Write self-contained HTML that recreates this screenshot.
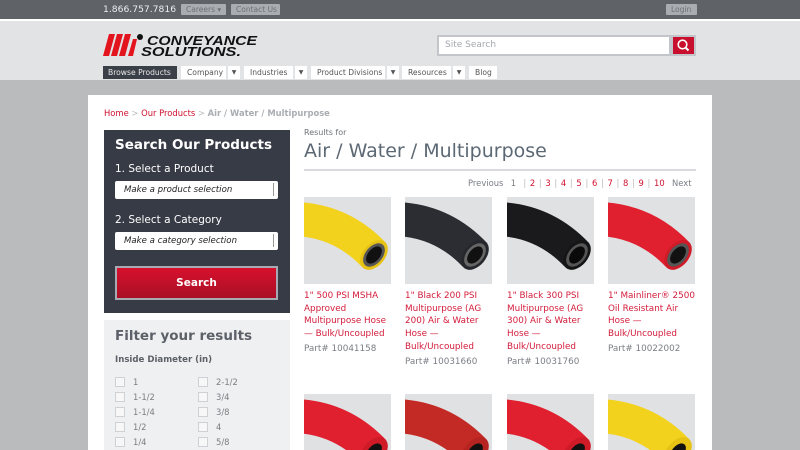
<!DOCTYPE html>
<html><head><meta charset="utf-8"><style>
*{margin:0;padding:0;box-sizing:border-box}
html,body{width:800px;height:450px;overflow:hidden}
body{background:#b9bbbd;font-family:"DejaVu Sans",Verdana,sans-serif;position:relative}
.abs{position:absolute;white-space:nowrap}
.top{left:0;top:0;width:800px;height:19px;background:#5f6266}
.white{left:0;top:19px;width:800px;height:2px;background:#fff}
.hdr{left:0;top:21px;width:800px;height:59px;background:#e2e3e5}
.btn{background:#a9acb1;color:#6d7177;font-size:7.5px;height:11px;line-height:11px;padding:0 5px;top:4px;border-radius:1px}
.tab{top:66px;height:13px;background:#fff;font-size:7.6px;line-height:13px;color:#555;padding:0 6px}
.dd{top:66px;height:13px;width:12px;background:#fff;font-size:6px;line-height:13px;text-align:center;color:#555}
.panel{left:88px;top:95px;width:624px;height:355px;background:#fff}
.r{color:#d0102f}
.prod{width:87px;white-space:normal}
.img{width:87px;height:87px;background:#e0e1e3;overflow:hidden}
.img svg{display:block}
.img.s{height:56px}
.t{font-size:8.8px;line-height:12.7px;color:#d31b3a;margin-top:6px}
.p{font-size:8.8px;line-height:12.7px;color:#7a7e84;margin-top:2px}
.sel{left:115px;width:163px;height:18px;background:#fff;border-radius:2px;font-size:8.6px;font-style:italic;line-height:18px;padding-left:9px;color:#222}
.sel:after{content:"";position:absolute;right:1px;top:2px;width:3px;height:13px;border-left:1px solid #999}
.cb{font-size:8.4px;color:#7a7e84;height:15px;line-height:15px}
.cb i{display:inline-block;width:10px;height:10px;border:1px solid #cfd1d4;background:#f7f7f8;vertical-align:-2px;margin-right:8px}
</style></head><body>
<div class="abs top"></div>
<div class="abs" style="left:103px;top:3px;color:#eceef0;font-size:9.2px;line-height:13px">1.866.757.7816</div>
<div class="abs btn" style="left:181px">Careers ▾</div>
<div class="abs btn" style="left:231px;width:49px">Contact Us</div>
<div class="abs btn" style="left:666px;width:31px;padding:0 0 0 5px">Login</div>
<div class="abs white"></div>
<div class="abs hdr"></div>
<svg class="abs" style="left:103px;top:33px" width="160" height="25" viewBox="0 0 160 25">
<polygon points="6,1 12,1 6,23 0,23" fill="#e3141d"/>
<polygon points="14,1 20,1 14,23 8,23" fill="#e3141d"/>
<polygon points="22,1 28,1 22,23 16,23" fill="#e3141d"/>
<polygon points="30,6 34,6 30,23 25,23" fill="#e3141d"/>
<circle cx="37" cy="4" r="3" fill="#111"/>
<text x="44" y="12" font-family="Liberation Sans,sans-serif" font-weight="bold" font-style="italic" font-size="13" fill="#111" textLength="110" lengthAdjust="spacingAndGlyphs">CONVEYANCE</text>
<text x="38" y="23" font-family="Liberation Sans,sans-serif" font-weight="bold" font-style="italic" font-size="13" fill="#111" textLength="100" lengthAdjust="spacingAndGlyphs">SOLUTIONS.</text>
</svg>
<div class="abs" style="left:437px;top:35px;width:234px;height:21px;background:#fff;border:2px solid #c2c5c9;font-size:9px;line-height:17px;color:#a4a8ad;padding-left:6px">Site Search</div>
<div class="abs" style="left:671px;top:35px;width:25px;height:21px;background:#c8102e;border:2px solid #c2c5c9">
<svg width="21" height="17" viewBox="0 0 21 17"><circle cx="9.5" cy="7.5" r="4.3" fill="none" stroke="#fff" stroke-width="1.6"/><line x1="12.5" y1="10.5" x2="15.5" y2="13.5" stroke="#fff" stroke-width="2"/></svg></div>
<div class="abs tab" style="left:103px;background:#3b3f47;color:#e8e9eb;width:74px;padding:0 5px">Browse Products</div>
<div class="abs tab" style="left:181px;width:45px">Company</div>
<div class="abs dd" style="left:228px">▼</div>
<div class="abs tab" style="left:244px;width:49px">Industries</div>
<div class="abs dd" style="left:295px">▼</div>
<div class="abs tab" style="left:311px;width:74px">Product Divisions</div>
<div class="abs dd" style="left:387px">▼</div>
<div class="abs tab" style="left:402px;width:49px">Resources</div>
<div class="abs dd" style="left:453px">▼</div>
<div class="abs tab" style="left:469px;width:28px">Blog</div>

<div class="abs panel"></div>
<div class="abs" style="left:104px;top:108px;font-size:8.4px"><span class="r">Home</span> <span style="color:#bbb">&gt;</span> <span class="r">Our Products</span> <span style="color:#bbb">&gt;</span> <span style="color:#a9adb2;font-weight:bold">Air / Water / Multipurpose</span></div>

<div class="abs" style="left:104px;top:130px;width:186px;height:183px;background:#373b45"></div>
<div class="abs" style="left:115px;top:137px;color:#fff;font-weight:bold;font-size:13.5px">Search Our Products</div>
<div class="abs" style="left:115px;top:163px;color:#fff;font-size:10.5px">1. Select a Product</div>
<div class="abs sel" style="top:181px">Make a product selection</div>
<div class="abs" style="left:115px;top:214px;color:#fff;font-size:10.5px">2. Select a Category</div>
<div class="abs sel" style="top:232px">Make a category selection</div>
<div class="abs" style="left:115px;top:266px;width:163px;height:34px;border:2px solid #a7abb1;background:linear-gradient(#d7102d,#a90f26);color:#fff;font-weight:bold;font-size:10.5px;text-align:center;line-height:30px">Search</div>

<div class="abs" style="left:104px;top:320px;width:186px;height:130px;background:#eff0f1"></div>
<div class="abs" style="left:115px;top:328px;color:#5c6068;font-weight:bold;font-size:13.5px">Filter your results</div>
<div class="abs" style="left:115px;top:355px;color:#5c6068;font-weight:bold;font-size:8.6px">Inside Diameter (in)</div>
<div class="abs" style="left:115px;top:375px">
<div class="cb"><i></i>1</div><div class="cb"><i></i>1-1/2</div><div class="cb"><i></i>1-1/4</div><div class="cb"><i></i>1/2</div><div class="cb"><i></i>1/4</div></div>
<div class="abs" style="left:198px;top:375px">
<div class="cb"><i></i>2-1/2</div><div class="cb"><i></i>3/4</div><div class="cb"><i></i>3/8</div><div class="cb"><i></i>4</div><div class="cb"><i></i>5/8</div></div>

<div class="abs" style="left:304px;top:128px;font-size:8px;color:#6d7177">Results for</div>
<div class="abs" style="left:304px;top:140px;font-size:19px;color:#5c6874">Air / Water / Multipurpose</div>
<div class="abs" style="left:304px;top:169px;width:392px;height:2px;background:#d9dadd"></div>
<div class="abs" style="left:468px;top:178px;font-size:8.4px;color:#7a7e84;word-spacing:1px">Previous &nbsp;1 &nbsp;<span style="color:#bbb">|</span> <span class="r">2</span> <span style="color:#bbb">|</span> <span class="r">3</span> <span style="color:#bbb">|</span> <span class="r">4</span> <span style="color:#bbb">|</span> <span class="r">5</span> <span style="color:#bbb">|</span> <span class="r">6</span> <span style="color:#bbb">|</span> <span class="r">7</span> <span style="color:#bbb">|</span> <span class="r">8</span> <span style="color:#bbb">|</span> <span class="r">9</span> <span style="color:#bbb">|</span> <span class="r">10</span> &nbsp;Next</div>

<div class="abs prod" style="left:304px;top:197px"><div class="img"><svg width="87" height="87"><path d="M-8,22 Q38,24 70,58" stroke="#f2d21c" stroke-width="34" fill="none"/><ellipse cx="70" cy="58" rx="11" ry="17" transform="rotate(40 70 58)" fill="#e6c215"/><ellipse cx="70" cy="58" rx="8.5" ry="13.5" transform="rotate(40 70 58)" fill="#555"/><ellipse cx="70" cy="58" rx="6" ry="10" transform="rotate(40 70 58)" fill="#111"/></svg></div><div class="t">1" 500 PSI MSHA Approved Multipurpose Hose — Bulk/Uncoupled</div><div class="p">Part# 10041158</div></div>
<div class="abs prod" style="left:405px;top:197px"><div class="img"><svg width="87" height="87"><path d="M-8,22 Q38,24 70,58" stroke="#2b2d33" stroke-width="34" fill="none"/><ellipse cx="70" cy="58" rx="11" ry="17" transform="rotate(40 70 58)" fill="#25272c"/><ellipse cx="70" cy="58" rx="8.5" ry="13.5" transform="rotate(40 70 58)" fill="#666"/><ellipse cx="70" cy="58" rx="6" ry="10" transform="rotate(40 70 58)" fill="#111"/></svg></div><div class="t">1" Black 200 PSI Multipurpose (AG 200) Air &amp; Water Hose — Bulk/Uncoupled</div><div class="p">Part# 10031660</div></div>
<div class="abs prod" style="left:507px;top:197px"><div class="img"><svg width="87" height="87"><path d="M-8,22 Q38,24 70,58" stroke="#1a1a1c" stroke-width="34" fill="none"/><ellipse cx="70" cy="58" rx="11" ry="17" transform="rotate(40 70 58)" fill="#151515"/><ellipse cx="70" cy="58" rx="8.5" ry="13.5" transform="rotate(40 70 58)" fill="#555"/><ellipse cx="70" cy="58" rx="6" ry="10" transform="rotate(40 70 58)" fill="#0a0a0a"/></svg></div><div class="t">1" Black 300 PSI Multipurpose (AG 300) Air &amp; Water Hose — Bulk/Uncoupled</div><div class="p">Part# 10031760</div></div>
<div class="abs prod" style="left:608px;top:197px"><div class="img"><svg width="87" height="87"><path d="M-8,22 Q38,24 70,58" stroke="#e0202f" stroke-width="34" fill="none"/><ellipse cx="70" cy="58" rx="11" ry="17" transform="rotate(40 70 58)" fill="#cf1a28"/><ellipse cx="70" cy="58" rx="8.5" ry="13.5" transform="rotate(40 70 58)" fill="#555"/><ellipse cx="70" cy="58" rx="6" ry="10" transform="rotate(40 70 58)" fill="#111"/></svg></div><div class="t">1" Mainliner® 2500 Oil Resistant Air Hose — Bulk/Uncoupled</div><div class="p">Part# 10022002</div></div>

<div class="abs prod" style="left:304px;top:394px;height:56px;overflow:hidden"><div class="img s"><svg width="87" height="56"><path d="M-8,22 Q38,24 70,58" stroke="#e0202f" stroke-width="34" fill="none"/><ellipse cx="70" cy="58" rx="11" ry="17" transform="rotate(40 70 58)" fill="#cf1a28"/><ellipse cx="70" cy="58" rx="6" ry="10" transform="rotate(40 70 58)" fill="#111"/></svg></div></div>
<div class="abs prod" style="left:405px;top:394px;height:56px;overflow:hidden"><div class="img s"><svg width="87" height="56"><path d="M-8,22 Q38,24 70,58" stroke="#c42a25" stroke-width="34" fill="none"/><ellipse cx="70" cy="58" rx="11" ry="17" transform="rotate(40 70 58)" fill="#b52420"/><ellipse cx="70" cy="58" rx="6" ry="10" transform="rotate(40 70 58)" fill="#111"/></svg></div></div>
<div class="abs prod" style="left:507px;top:394px;height:56px;overflow:hidden"><div class="img s"><svg width="87" height="56"><path d="M-8,22 Q38,24 70,58" stroke="#e0202f" stroke-width="34" fill="none"/><ellipse cx="70" cy="58" rx="11" ry="17" transform="rotate(40 70 58)" fill="#cf1a28"/><ellipse cx="70" cy="58" rx="6" ry="10" transform="rotate(40 70 58)" fill="#111"/></svg></div></div>
<div class="abs prod" style="left:608px;top:394px;height:56px;overflow:hidden"><div class="img s"><svg width="87" height="56"><path d="M-8,22 Q38,24 70,58" stroke="#f2d21c" stroke-width="34" fill="none"/><ellipse cx="70" cy="58" rx="11" ry="17" transform="rotate(40 70 58)" fill="#e6c215"/><ellipse cx="70" cy="58" rx="6" ry="10" transform="rotate(40 70 58)" fill="#111"/></svg></div></div>
</body></html>
